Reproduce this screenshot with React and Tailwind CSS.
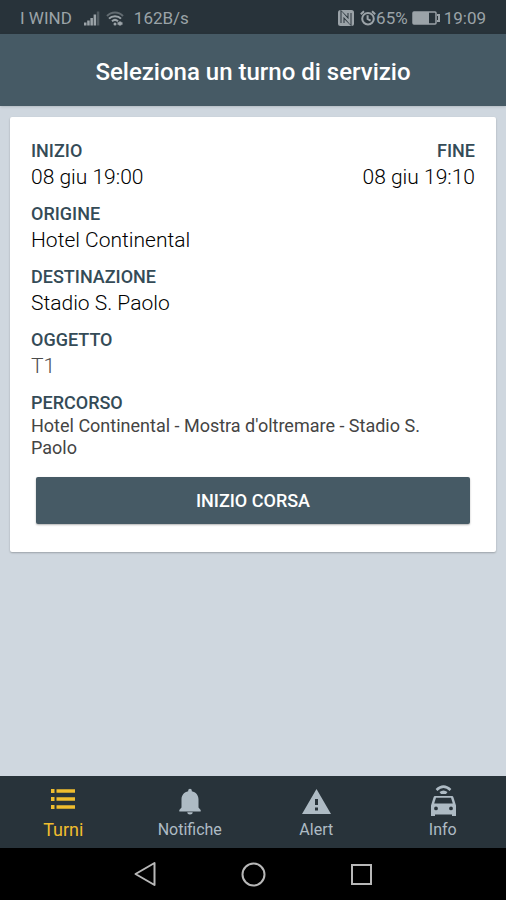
import React from "react";

function SignalIcon() {
  return (
    <svg className="h-4 w-4" viewBox="0 0 16 16" fill="currentColor" aria-hidden="true">
      <rect x="0" y="12.500" width="2.500" height="3" />
      <rect x="3.200" y="10.500" width="2.500" height="5" />
      <rect x="6.400" y="8" width="2.500" height="7.500" />
      <rect x="9.600" y="4.500" width="2.500" height="11" />
      <rect x="12.800" y="1.500" width="2.500" height="14" opacity="0.35" />
    </svg>
  );
}

function WifiIcon() {
  return (
    <svg className="h-4 w-[18px]" viewBox="0 0 18 16" fill="none" stroke="currentColor" strokeWidth="2" aria-hidden="true">
      <path d="M1 6C5.500 1.200 12.500 1.200 17 6" opacity="0.5" />
      <path d="M3 8.700c3-3.300 9-3.300 12 0" />
      <path d="M6 11.300c1.800-1.700 4.200-1.700 6 0" />
      <circle cx="9" cy="14" r="1.500" fill="currentColor" stroke="none" />
      <path d="M11.500 13.500h5M14 11.500v4" strokeWidth="2.400" />
    </svg>
  );
}

function NfcIcon() {
  return (
    <svg className="h-4 w-4" viewBox="0 0 16 16" aria-hidden="true">
      <rect x="0" y="0" width="16" height="16" rx="2.500" fill="currentColor" />
      <path d="M4.500 13V4.500L11.500 11.500V3" fill="none" stroke="#28333a" strokeWidth="4" />
      <path d="M4.500 13V4L11.500 12V3" fill="none" stroke="currentColor" strokeWidth="2" />
    </svg>
  );
}

function AlarmIcon() {
  return (
    <svg className="h-4 w-4" viewBox="0 0 16 16" fill="none" stroke="currentColor" strokeWidth="2" aria-hidden="true">
      <circle cx="8" cy="8.700" r="5.800" />
      <path d="M7.600 5.300v3.700l3 1.700M.8 4.200 4 1.300M15.200 4.200 12 1.300" />
    </svg>
  );
}

function BatteryIcon() {
  return (
    <svg className="h-[14px] w-7" viewBox="0 0 28 14" fill="none" stroke="currentColor" aria-hidden="true">
      <rect x="1" y="1" width="23" height="12" rx="1" strokeWidth="1.500" />
      <rect x="1" y="1" width="16" height="12" fill="currentColor" stroke="none" />
      <path d="M25 4h2v6h-2" strokeWidth="2" />
    </svg>
  );
}

function ListIcon() {
  return (
    <svg className="h-8 w-8" viewBox="0 0 32 32" fill="currentColor" aria-hidden="true">
      <path d="M4 5h3.500v4H4zM9.500 5.300H28v3.400H9.500zM4 13h3.500v4H4zM9.500 13.300H28v3.400H9.500zM4 21h3.500v4H4zM9.500 21.300H28v3.400H9.500z" />
    </svg>
  );
}

function BellIcon() {
  return (
    <svg className="h-8 w-8" viewBox="0 0 32 32" fill="currentColor" aria-hidden="true">
      <path d="M16 30.500c1.600 0 2.700-1 2.700-2.300h-5.400C13.300 29.500 14.400 30.500 16 30.500zM24.500 23.500v-8c0-4.400-2.600-7.400-6.700-8.200V6.600a1.800 1.800 0 0 0-3.600 0v.7C10.100 8.100 7.500 11.100 7.500 15.500v8L5.300 26v1.500h21.400V26z" />
    </svg>
  );
}

function AlertIcon() {
  return (
    <svg className="h-8 w-8" viewBox="0 0 32 32" fill="currentColor" aria-hidden="true">
      <path fillRule="evenodd" d="M16.500 5 2 30h29zM15 15h3v6h-3zM15 23.500h3v3h-3z" />
    </svg>
  );
}

function CarIcon() {
  return (
    <svg className="h-8 w-8" viewBox="0 0 32 32" fill="currentColor" aria-hidden="true">
      <path d="M9.500 6Q16.500-.7 23.500 6" fill="none" stroke="currentColor" strokeWidth="2.500" />
      <path d="M12.500 8Q16.500 5 20.500 8L19 10h-5z" />
      <path
        fillRule="evenodd"
        d="M8.500 12h16c1 0 1.700.5 2 1.400L29 21.500V32c0 .7-.5 1.200-1.200 1.200h-1.600c-.7 0-1.200-.5-1.200-1.200v-1.500H8V32c0 .7-.5 1.200-1.200 1.200H5.200C4.500 33.200 4 32.700 4 32V21.500l2.500-8.100c.3-.9 1-1.400 2-1.400zM9 13.800 7.200 19.500h18.600L24 13.800zM9 22.500a1.900 1.900 0 1 0 0 3.800 1.900 1.900 0 0 0 0-3.800zM24 22.500a1.900 1.900 0 1 0 0 3.800 1.900 1.900 0 0 0 0-3.800z"
      />
    </svg>
  );
}

function Field({ label, value, right, muted }) {
  return (
    <div className={right ? "text-right" : ""}>
      <dt className="text-[18px] leading-6 font-medium text-[#344b57]">{label}</dt>
      <dd className={"text-[21px] leading-7 font-light " + (muted ? "text-[#4b4b4b]" : "text-black")}>{value}</dd>
    </div>
  );
}

function Tab({ icon, label, active }) {
  return (
    <a
      href="#"
      aria-current={active ? "page" : undefined}
      className={
        "flex flex-1 flex-col items-center pt-2 leading-6 " +
        (active ? "text-[18px] text-[#f0bd2e]" : "text-[16px] text-[#aebbc4]")
      }
    >
      {icon}
      <span className="pt-0.5">{label}</span>
    </a>
  );
}

export default function App() {
  return (
    <div className="flex min-h-screen flex-col bg-[#cfd7df] font-[Roboto,sans-serif]">
      <div className="flex h-[34px] items-center justify-between bg-[#28333a] px-5 pt-0.5 text-[17px] leading-6 text-[#9ba3a8]">
        <div className="flex items-center">
          <span>I WIND</span>
          <span className="ml-3"><SignalIcon /></span>
          <span className="ml-1.5"><WifiIcon /></span>
          <span className="ml-2.5">162B/s</span>
        </div>
        <div className="flex items-center">
          <NfcIcon />
          <span className="ml-1.5"><AlarmIcon /></span>
          <span>65%</span>
          <span className="mx-1"><BatteryIcon /></span>
          <span>19:09</span>
        </div>
      </div>

      <header className="flex h-[72px] items-center justify-center bg-[#465a65] pt-1 shadow-sm">
        <h1 className="text-[24px] leading-8 font-medium text-white">Seleziona un turno di servizio</h1>
      </header>

      <main className="flex-1 px-2.5 pt-[11px]">
        <section className="rounded-xs bg-white px-[21px] pt-[22px] pb-7 shadow-[0_1px_2px_rgba(0,0,0,0.25)]">
          <dl className="flex flex-col gap-[11px]">
            <div className="flex justify-between">
              <Field label="INIZIO" value="08 giu 19:00" />
              <Field label="FINE" value="08 giu 19:10" right />
            </div>
            <Field label="ORIGINE" value="Hotel Continental" />
            <Field label="DESTINAZIONE" value="Stadio S. Paolo" />
            <Field label="OGGETTO" value="T1" muted />
            <div>
              <dt className="text-[18px] leading-6 font-medium text-[#344b57]">PERCORSO</dt>
              <dd className="pr-4 text-[18px] leading-[22px] text-[#444444]">
                Hotel Continental - Mostra d'oltremare - Stadio S. Paolo
              </dd>
            </div>
          </dl>
          <div className="px-[5px] pt-[18px]">
            <button
              type="button"
              className="h-[47px] w-full rounded-xs bg-[#465a65] text-[18px] font-medium text-white shadow-[0_1px_2px_rgba(0,0,0,0.3)]"
            >
              INIZIO CORSA
            </button>
          </div>
        </section>
      </main>

      <nav className="flex h-[72px] bg-[#28333a]">
        <Tab icon={<ListIcon />} label="Turni" active />
        <Tab icon={<BellIcon />} label="Notifiche" />
        <Tab icon={<AlertIcon />} label="Alert" />
        <Tab icon={<CarIcon />} label="Info" />
      </nav>

      <div className="flex h-[52px] items-center justify-center gap-20 bg-black text-[#b8b8b8]">
        <button type="button" aria-label="Indietro">
          <svg className="h-7 w-7" viewBox="0 0 28 28" fill="none" stroke="currentColor" strokeWidth="2" strokeLinejoin="round" aria-hidden="true">
            <path d="M23.500 3v22L4.500 14z" />
          </svg>
        </button>
        <button type="button" aria-label="Home">
          <svg className="h-7 w-7" viewBox="0 0 28 28" fill="none" stroke="currentColor" strokeWidth="2" aria-hidden="true">
            <circle cx="14.500" cy="14.500" r="11" />
          </svg>
        </button>
        <button type="button" aria-label="Recenti">
          <svg className="h-7 w-7" viewBox="0 0 28 28" fill="none" stroke="currentColor" strokeWidth="2" aria-hidden="true">
            <rect x="5" y="5" width="19" height="19" />
          </svg>
        </button>
      </div>
    </div>
  );
}
